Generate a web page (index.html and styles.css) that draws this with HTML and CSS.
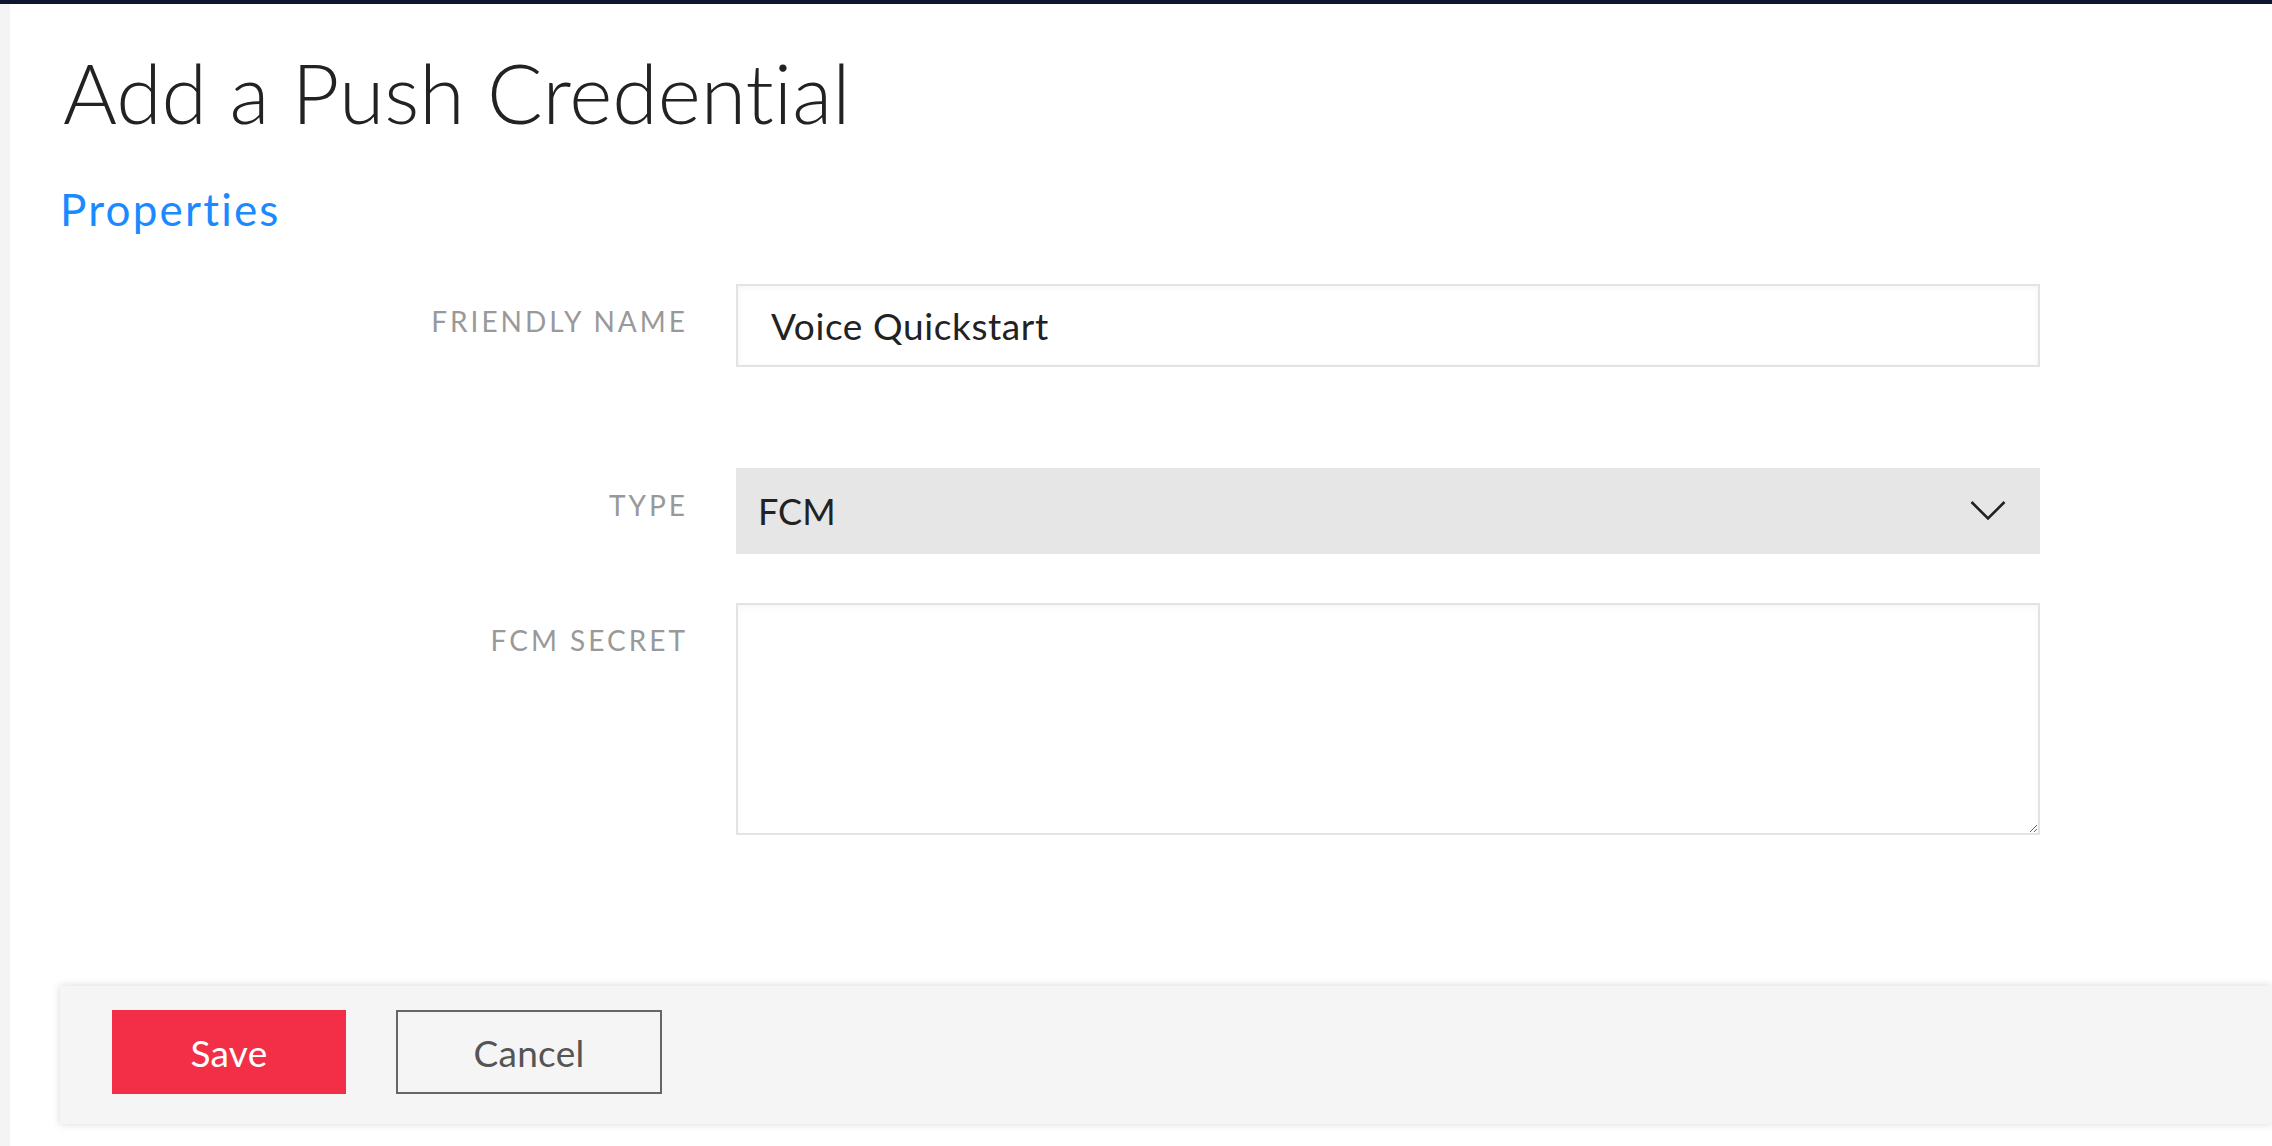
FILE: index.html
```html
<!DOCTYPE html>
<html lang="en">
<head>
<meta charset="utf-8">
<title>Add a Push Credential</title>
<link rel="stylesheet" href="styles.css">
</head>
<body>
<div class="topbar"></div>
<div class="layout">
  <div class="rail"></div>
  <main class="main">
    <h1 class="title">Add a Push Credential</h1>
    <h2 class="section">Properties</h2>
    <form class="form">
      <div class="row row-name">
        <label class="label" for="fname">FRIENDLY NAME</label>
        <input class="input" id="fname" type="text" value="Voice Quickstart">
      </div>
      <div class="row">
        <label class="label" for="ftype">TYPE</label>
        <div class="select">
          <span class="select-value">FCM</span>
          <svg class="chevron" width="36" height="22" viewBox="0 0 36 22"><path d="M1.5 2 L18 18.5 L34.5 2" fill="none" stroke="#222" stroke-width="2.6"/></svg>
        </div>
      </div>
      <div class="row">
        <label class="label" for="fsecret">FCM SECRET</label>
        <textarea class="textarea" id="fsecret"></textarea>
      </div>
    </form>
    <div class="footer">
      <button class="btn btn-save" type="button">Save</button>
      <button class="btn btn-cancel" type="button">Cancel</button>
    </div>
  </main>
</div>
</body>
</html>
```

FILE: styles.css
```css
html, body {
  margin: 0;
  padding: 0;
  background: #ffffff;
  height: 100%;
  overflow: hidden;
}
body {
  font-family: "Lato", "Open Sans", sans-serif;
  color: #222;
  font-variant-ligatures: none;
}
.topbar {
  height: 4px;
  background: #0e1530;
}
.layout {
  display: flex;
  min-height: 1142px;
}
.rail {
  width: 10px;
  flex: none;
  background: #f4f4f4;
}
.main {
  flex: 1;
  padding-left: 50px;
  min-width: 0;
}
.title {
  margin: 39px 0 0 3px;
  font-size: 82.5px;
  font-weight: 300;
  line-height: 100px;
  color: #222;
  letter-spacing: 0;
}
.section {
  margin: 40px 0 0 0;
  font-size: 44px;
  font-weight: 400;
  line-height: 52px;
  letter-spacing: 2.2px;
  color: #1a8aff;
}
.form {
  margin-top: 49px;
}
.row {
  display: flex;
  align-items: flex-start;
  margin-bottom: 49px;
}
.row-name {
  margin-bottom: 101px;
}
.label {
  width: 628px;
  flex: none;
  text-align: right;
  padding-top: 20px;
  margin-right: 48px;
  font-size: 28px;
  line-height: 34px;
  letter-spacing: 3px;
  color: #999;
}
.input {
  box-sizing: border-box;
  width: 1304px;
  height: 83px;
  border: 2px solid #e3e3e3;
  box-shadow: inset 0 1px 6px rgba(0,0,0,0.05);
  padding: 0 0 0 33px;
  font-family: "Lato", sans-serif;
  font-size: 37px;
  letter-spacing: 0.6px;
  color: #222;
  background: #fff;
  outline: none;
}
.select {
  box-sizing: border-box;
  width: 1304px;
  height: 86px;
  background: #e6e6e6;
  display: flex;
  align-items: center;
  justify-content: space-between;
  padding: 0 34px 0 22px;
}
.select-value {
  font-size: 36px;
  color: #222;
}
.chevron {
  display: block;
}
.textarea {
  box-sizing: border-box;
  width: 1304px;
  height: 232px;
  border: 2px solid #e3e3e3;
  box-shadow: inset 0 3px 6px rgba(0,0,0,0.03);
  background: #fff;
  resize: both;
  display: block;
  outline: none;
  font-family: "Lato", sans-serif;
  font-size: 28px;
  margin: 0;
}
.footer {
  margin-top: 151px;
  height: 138px;
  box-sizing: border-box;
  background: #f5f5f5;
  box-shadow: 0 0 8px rgba(0,0,0,0.16);
  display: flex;
  align-items: flex-start;
  gap: 50px;
  padding: 24px 0 0 52px;
}
.btn {
  box-sizing: border-box;
  height: 84px;
  font-family: "Lato", sans-serif;
  font-size: 37px;
  letter-spacing: 0.3px;
  cursor: pointer;
  margin: 0;
}
.btn-save {
  width: 234px;
  background: #f22f46;
  color: #fff;
  border: none;
}
.btn-cancel {
  width: 266px;
  background: transparent;
  color: #555;
  border: 2px solid #666;
}
```
